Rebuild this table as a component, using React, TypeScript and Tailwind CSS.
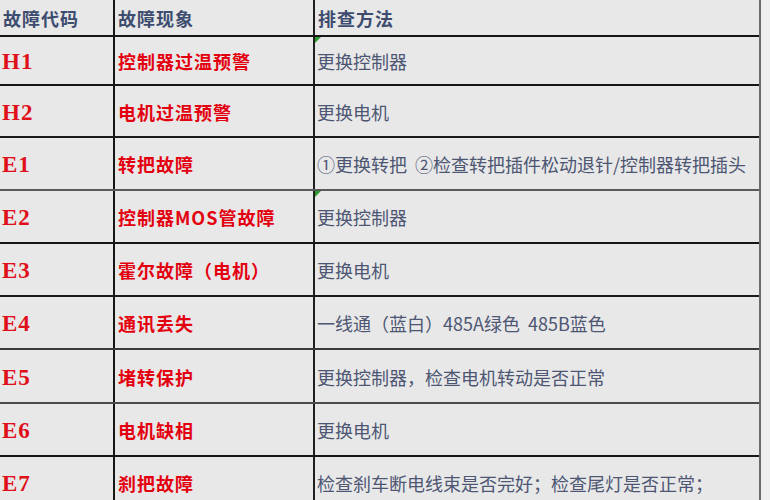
import React from "react";

type Row = { code: string; name: string; fix: string; h: string; line: string; tri?: boolean };

const rows: Row[] = [
  { code: "H1", name: "控制器过温预警", fix: "更换控制器", h: "h-[49px]", line: "border-[#161616]", tri: true },
  { code: "H2", name: "电机过温预警", fix: "更换电机", h: "h-[52px]", line: "border-[#1a1a1a]" },
  { code: "E1", name: "转把故障", fix: "①更换转把  ②检查转把插件松动退针/控制器转把插头", h: "h-[53px]", line: "border-[#5a5a5a]" },
  { code: "E2", name: "控制器MOS管故障", fix: "更换控制器", h: "h-[53px]", line: "border-[#161616]", tri: true },
  { code: "E3", name: "霍尔故障（电机）", fix: "更换电机", h: "h-[53px]", line: "border-[#1a1a1a]" },
  { code: "E4", name: "通讯丢失", fix: "一线通（蓝白）485A绿色  485B蓝色", h: "h-[53px]", line: "border-[#3a3a3a]" },
  { code: "E5", name: "堵转保护", fix: "更换控制器，检查电机转动是否正常", h: "h-[54px]", line: "border-[#4a4a4a]" },
  { code: "E6", name: "电机缺相", fix: "更换电机", h: "h-[53px]", line: "border-[#161616]" },
  { code: "E7", name: "刹把故障", fix: "检查刹车断电线束是否完好；检查尾灯是否正常；", h: "h-[53px]", line: "border-transparent" },
];

const cjk = "font-['Noto_Sans_CJK_SC','Noto_Sans',sans-serif]";

export default function App() {
  return (
    <div className="w-[770px] h-[500px] overflow-hidden bg-[#efefef] flex">
      <div className="w-[761px] shrink-0 bg-[#e8e8e8] border-r-2 border-[#6b6b6b] flex flex-col">
        <div className="h-[37px] shrink-0 flex border-b-2 border-[#161616]">
          <div className={`w-[115px] shrink-0 border-r-2 border-[#161616] pl-[3px] pt-[1px] flex items-center text-[18px] tracking-[1px] font-bold text-[#3d4c6f] ${cjk}`}>
            故障代码
          </div>
          <div className={`w-[200px] shrink-0 border-r-2 border-[#1f1f1f] pl-[3px] pt-[1px] flex items-center text-[18px] tracking-[1px] font-bold text-[#3d4c6f] ${cjk}`}>
            故障现象
          </div>
          <div className={`flex-1 pl-[3px] pt-[1px] flex items-center text-[18px] tracking-[1px] font-bold text-[#3d4c6f] ${cjk}`}>
            排查方法
          </div>
        </div>
        {rows.map((r) => (
          <div key={r.code} className={`${r.h} shrink-0 flex border-b-2 ${r.line}`}>
            <div className="w-[115px] shrink-0 border-r-2 border-[#161616] pl-[2px] pt-[4px] flex items-center text-[23px] tracking-[1px] font-bold text-[#e0101a] font-['Liberation_Serif',serif]">
              {r.code}
            </div>
            <div className={`w-[200px] shrink-0 border-r-2 border-[#1f1f1f] pl-[3px] pt-[2px] flex items-center text-[18px] tracking-[1px] font-bold text-[#e3000f] ${cjk}`}>
              {r.name}
            </div>
            <div className={`relative flex-1 pl-[2px] pt-[2px] flex items-center text-[18px] text-[#4d5673] whitespace-pre ${cjk}`}>
              {r.tri && (
                <span className="absolute left-0 top-0 w-0 h-0 border-t-[6px] border-t-[#2e9a2e] border-r-[6px] border-r-transparent" />
              )}
              {r.fix}
            </div>
          </div>
        ))}
      </div>
    </div>
  );
}
